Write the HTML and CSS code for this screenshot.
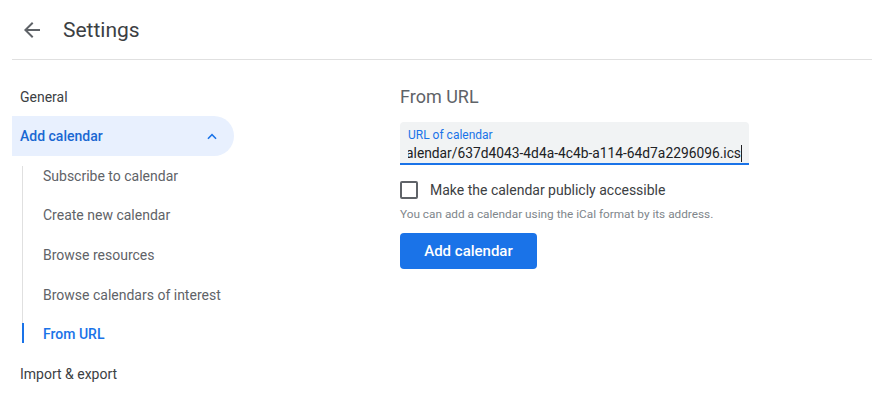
FILE: index.html
```html
<!DOCTYPE html>
<html lang="en">
<head>
    <meta charset="UTF-8">
    <title>Settings</title>
    <link rel="stylesheet" href="styles.css">
</head>
<body>

<header class="topbar">
    <button class="back-btn" aria-label="Back">
        <svg width="24" height="24" viewBox="0 0 24 24"><path d="M20 11H7.83l5.59-5.59L12 4l-8 8 8 8 1.41-1.41L7.83 13H20v-2z" fill="#5f6368"/></svg>
    </button>
    <h1 class="title">Settings</h1>
</header>

<div class="page">
    <!-- Left navigation -->
    <nav class="side-nav">
        <div class="nav-row">General</div>
        <div class="nav-row open">
            <span>Add calendar</span>
            <svg class="chevron" width="12" height="8" viewBox="0 0 12 8"><path d="M6 1.6 1.4 6.2l1.1 1.1L6 3.8l3.5 3.5 1.1-1.1z" fill="#1a73e8"/></svg>
        </div>
        <div class="sub-nav">
            <div class="sub-row">Subscribe to calendar</div>
            <div class="sub-row">Create new calendar</div>
            <div class="sub-row">Browse resources</div>
            <div class="sub-row">Browse calendars of interest</div>
            <div class="sub-row current">From URL</div>
        </div>
        <div class="nav-row">Import &amp; export</div>
    </nav>

    <!-- Content -->
    <main class="content">
        <h2 class="section-title">From URL</h2>
        <div class="field">
            <label class="field-label">URL of calendar</label>
            <div class="field-value"><span>calendar/637d4043-4d4a-4c4b-a114-64d7a2296096.ics</span><i class="caret"></i></div>
        </div>
        <label class="check">
            <span class="box"></span>
            <span>Make the calendar publicly accessible</span>
        </label>
        <p class="hint">You can add a calendar using the iCal format by its address.</p>
        <button class="primary-btn">Add calendar</button>
    </main>
</div>

</body>
</html>
```

FILE: styles.css
```css
body {
    margin: 0;
    font-family: Roboto, "Noto Sans", Arial, sans-serif;
    color: #3c4043;
    background: #fff;
}

/* Header */
.topbar {
    display: flex;
    align-items: center;
    height: 59px;
    margin-left: 12px;
    border-bottom: 1px solid #e0e0e0;
}
.back-btn {
    display: flex;
    padding: 0;
    margin: 0 0 0 8px;
    border: none;
    background: none;
    cursor: pointer;
}
.title {
    margin: 0 0 0 19px;
    font-size: 21px;
    font-weight: 400;
    color: #3c4043;
}

.page {
    display: flex;
    padding-top: 17px;
}

/* Side navigation */
.side-nav {
    width: 222px;
    margin-left: 12px;
    font-size: 14px;
}
.nav-row {
    display: flex;
    align-items: center;
    justify-content: space-between;
    height: 40px;
    padding: 0 12px 0 8px;
}
.nav-row.open {
    height: 40px;
    margin-top: -1px;
    background: #e8f0fe;
    border-radius: 0 20px 20px 0;
    color: #1967d2;
    font-weight: 500;
}
.chevron {
    margin-right: 4px;
}
.sub-nav {
    position: relative;
    margin-left: 10px;
}
.sub-nav::before {
    content: "";
    position: absolute;
    left: 0;
    top: 10px;
    bottom: 12px;
    width: 1px;
    background: #e0e0e0;
}
.sub-row {
    position: relative;
    display: flex;
    align-items: center;
    height: 39.6px;
    padding-left: 21px;
    color: #5f6368;
}
.sub-row.current {
    color: #1a73e8;
    font-weight: 500;
}
.sub-row.current::before {
    content: "";
    position: absolute;
    left: 0;
    top: 9px;
    height: 20px;
    width: 2px;
    background: #1a73e8;
}

/* Content */
.content {
    margin-left: 166px;
    width: 349px;
}
.section-title {
    margin: 0;
    height: 40px;
    line-height: 40px;
    font-size: 18px;
    font-weight: 400;
    color: #5f6368;
}
.field {
    box-sizing: border-box;
    margin-top: 5px;
    height: 43px;
    padding: 0 7px 0 8px;
    background: #f1f3f4;
    border-radius: 4px 4px 0 0;
    border-bottom: 2px solid #1a73e8;
}
.field-label {
    display: block;
    padding-top: 6px;
    font-size: 12px;
    line-height: 15px;
    color: #1a73e8;
}
.field-value {
    display: flex;
    justify-content: flex-end;
    align-items: center;
    overflow: hidden;
    white-space: nowrap;
    font-size: 13.8px;
    line-height: 20px;
    color: #202124;
}
.caret {
    flex: none;
    width: 1px;
    height: 17px;
    background: #202124;
}
.check {
    display: flex;
    align-items: center;
    margin-top: 16px;
    font-size: 14px;
    color: #3c4043;
}
.box {
    box-sizing: border-box;
    width: 18px;
    height: 18px;
    margin-right: 12px;
    border: 2px solid #5f6368;
    border-radius: 2px;
}
.hint {
    margin: 8px 0 0;
    font-size: 11.8px;
    color: #80868b;
}
.primary-btn {
    margin-top: 12px;
    width: 137px;
    height: 36px;
    border: none;
    border-radius: 4px;
    background: #1a73e8;
    color: #fff;
    font-family: Roboto, Arial, sans-serif;
    font-size: 15px;
    font-weight: 500;
    cursor: pointer;
}
```
